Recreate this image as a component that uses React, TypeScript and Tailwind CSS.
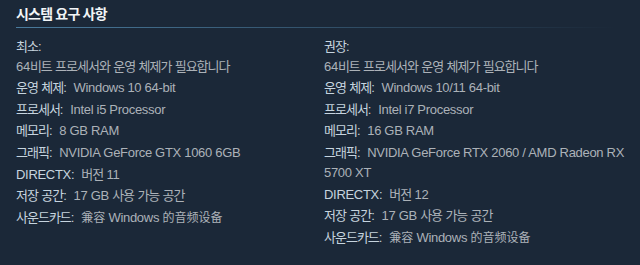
import React from 'react';

type Req = { label: string; value: string };

const MIN_REQS: Req[] = [
  { label: '운영 체제', value: 'Windows 10 64-bit' },
  { label: '프로세서', value: 'Intel i5 Processor' },
  { label: '메모리', value: '8 GB RAM' },
  { label: '그래픽', value: 'NVIDIA GeForce GTX 1060 6GB' },
  { label: 'DIRECTX', value: '버전 11' },
  { label: '저장 공간', value: '17 GB 사용 가능 공간' },
  { label: '사운드카드', value: '兼容 Windows 的音频设备' },
];

const REC_REQS: Req[] = [
  { label: '운영 체제', value: 'Windows 10/11 64-bit' },
  { label: '프로세서', value: 'Intel i7 Processor' },
  { label: '메모리', value: '16 GB RAM' },
  { label: '그래픽', value: 'NVIDIA GeForce RTX 2060 / AMD Radeon RX 5700 XT' },
  { label: 'DIRECTX', value: '버전 12' },
  { label: '저장 공간', value: '17 GB 사용 가능 공간' },
  { label: '사운드카드', value: '兼容 Windows 的音频设备' },
];

// hangul / hanzi runs get their own setting so they match the narrower korean UI font
function Txt({ text }: { text: string }) {
  const parts = text.split(/([\u3130-\u318F\uAC00-\uD7AF]+|[\u4E00-\u9FFF]+)/);
  return (
    <>
      {parts.map((p, i) => {
        if (!p) return null;
        if (/[\uAC00-\uD7AF\u3130-\u318F]/.test(p)) {
          return (
            <span key={i} className="tracking-[-1px]">
              {p}
            </span>
          );
        }
        if (/[\u4E00-\u9FFF]/.test(p)) {
          return (
            <span key={i} className="text-[12px] tracking-normal">
              {p}
            </span>
          );
        }
        return <React.Fragment key={i}>{p}</React.Fragment>;
      })}
    </>
  );
}

function ReqColumn({ title, reqs, width }: { title: string; reqs: Req[]; width: string }) {
  return (
    <div className={`${width} shrink-0`}>
      <div className="leading-5 text-[#c6d4df]">
        <Txt text={title} />:
      </div>
      <ul>
        <li className="leading-5">
          <Txt text="64비트 프로세서와 운영 체제가 필요합니다" />
        </li>
        {reqs.map((r) => (
          <li key={r.label} className="leading-5 py-[0.85px]">
            <span className="mr-[7px] text-[#c6d4df]">
              <Txt text={r.label} />:
            </span>
            <Txt text={r.value} />
          </li>
        ))}
      </ul>
    </div>
  );
}

export default function App() {
  return (
    <div className="w-[640px] h-[265px] overflow-hidden bg-[#1b2838] pl-4 pt-1 font-['Liberation_Sans','Noto_Sans_CJK_KR',sans-serif] text-[13px] tracking-[-0.3px] text-[#acb2b8]">
      <h2 className="text-[14px] leading-5 tracking-[-0.8px] font-bold text-[#f2f5f7]">
        시스템 요구 사항
      </h2>
      <div className="mt-[3px] h-px w-[600px] bg-linear-to-r from-[#4a7b9d] to-transparent" />

      <div className="mt-[9px] flex gap-3">
        <ReqColumn title="최소" reqs={MIN_REQS} width="w-[296px]" />
        <ReqColumn title="권장" reqs={REC_REQS} width="w-[306px]" />
      </div>
    </div>
  );
}
